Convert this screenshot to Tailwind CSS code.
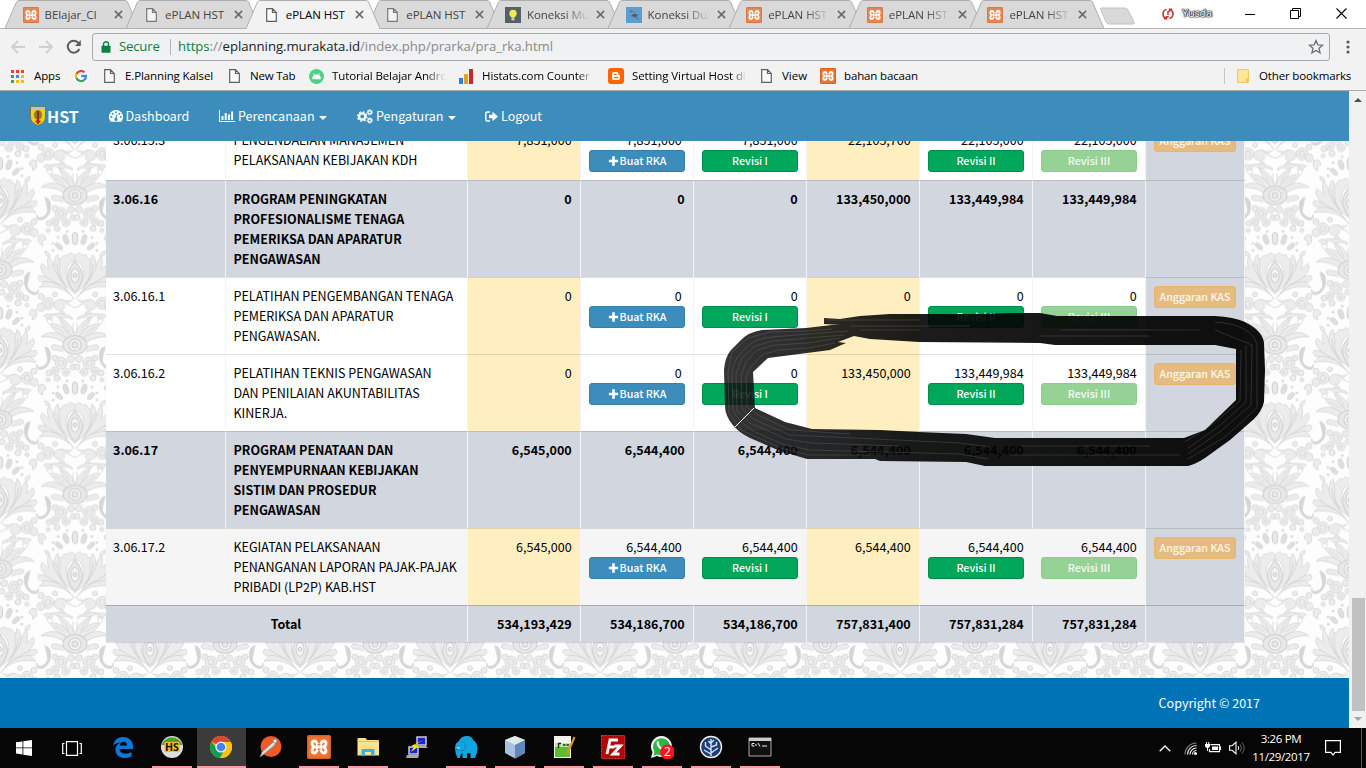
<!DOCTYPE html>
<html lang="id">
<head>
<meta charset="utf-8">
<title>ePLAN HST</title>
<script src="https://cdn.jsdelivr.net/npm/@tailwindcss/browser@4"></script>
</head>
<body class="w-[1366px] h-[768px] overflow-hidden bg-white flex flex-col">

<!-- shared symbols -->
<svg width="0" height="0" class="absolute">
  <defs>
    <symbol id="xampp" viewBox="0 0 24 24"><rect width="24" height="24" rx="2" fill="#ec7430"/><rect x=".8" y=".8" width="22.400" height="22.400" rx="1.500" fill="none" stroke="#c95a1c"/><path d="M10.500 9.500L9.300 7.200Q8.800 6 7.500 6 5 6 5 8.500 5 11 7.500 12 5 13 5 15.500 5 18 7.500 18q1.300 0 1.800-1.200l1.200-2.300M13.500 9.500l1.200-2.300Q15.200 6 16.500 6 19 6 19 8.500q0 2.500-2.500 3.500 2.500 1 2.500 3.500 0 2.500-2.500 2.500-1.300 0-1.800-1.200l-1.200-2.300" fill="none" stroke="#fff" stroke-width="2.800" stroke-linejoin="round"/><path d="M9 10.200l3 1 3-1v3.600l-3-1-3 1z" fill="#fff" stroke="#fff"/></symbol>
    <symbol id="doc" viewBox="0 0 11 14"><path d="M.7.7h5.800l3.800 3.800v8.800H.7zM6.500.7v3.800h3.800" fill="#fafafa" stroke="#606060" stroke-width="1.200"/></symbol>
    <symbol id="bulb" viewBox="0 0 16 16"><rect width="16" height="16" fill="#36424e"/><circle cx="8" cy="6.500" r="3.700" fill="#f6f02a"/><path d="M6.300 9h3.400v1.800H6.300z" fill="#f6f02a"/><path d="M6.500 11.300h3v2h-3z" fill="#ddd"/></symbol>
    <symbol id="bird" viewBox="0 0 16 16"><rect width="16" height="16" fill="#3c90d2"/><path d="M3 3l5 2 1 2 4 1-3 1 3 4-4-3-4-1 2-2z" fill="#353b45"/><path d="M5 5l3 1v1z" fill="#fff"/></symbol>
    <symbol id="close" viewBox="0 0 10 10"><path d="M1 1l8 8M9 1L1 9" stroke="#6a6a6a" stroke-width="1.700"/></symbol>
    <symbol id="plus" viewBox="0 0 10 10"><path d="M3.700.3h2.600v3.400h3.400v2.600H6.300v3.400H3.700V6.300H.3V3.700h3.400z" fill="#fff"/></symbol>
    <symbol id="chrome" viewBox="0 0 24 24"><circle cx="12" cy="12" r="11" fill="#fbc116"/><path d="M12 12L2.500 6.500A11 11 0 0 1 21.500 6.500L21.800 7H12z" fill="#db4437"/><path d="M2.500 6.500A11 11 0 0 0 11 23l5-9-8 0z" fill="#0f9d58"/><path d="M12 7h9.800A11 11 0 0 1 11 23l5.300-8.500z" fill="#fbc116"/><circle cx="12" cy="12" r="5.600" fill="#f4f4f4"/><circle cx="12" cy="12" r="4.300" fill="#4285f4"/></symbol>
  </defs>
</svg>

<!-- browser chrome -->
<header class="h-[91px] shrink-0 flex flex-col bg-[#f2f2f2] text-black border-b border-[#a9a9a9]" style="font-family:'Open Sans','Noto Sans',sans-serif">
  <div class="h-[29px] bg-white flex items-start relative border-b border-[#b5b5b5]">
    <div id="tabs" class="flex pl-[5px] h-[29px]"></div>
    <svg class="w-9 h-[18px] mt-[7px] ml-[10px]" viewBox="0 0 36 18"><path d="M1 1h24q2 0 3 2l6 12q1 2-1 2H9q-2 0-3-2L1 3q-1-2 0-2z" fill="#d8d8d8" stroke="#c2c2c2"/></svg>
    <div class="ml-auto flex items-center h-[27px]">
      <svg class="w-3 h-3 mr-[8px]" viewBox="0 0 12 12"><path d="M4.500 1.500Q1 2.500 1 6t3 4.500M2 10.700h2.500V8M7.500 10.500Q11 9.500 11 6T8 1.500M10 1.300H7.500V4M6 3v4M6 8v1.500" fill="none" stroke="#c9302c" stroke-width="1.500"/></svg>
      <span class="w-[30px] text-[11px] tracking-[-.2px] text-white mr-[33px] whitespace-nowrap [text-shadow:0_0_1px_#222,0_0_1px_#222,0_0_1px_#333,0_0_2px_#444,1px_0_1px_#333]">Yusda</span>
      <svg class="w-2.5 h-3 mr-[35px]" viewBox="0 0 10 12"><path d="M0 6.500h10" stroke="#000"/></svg>
      <svg class="w-[11px] h-[11px] mr-[35px]" viewBox="0 0 11 11"><path d="M.5 2.500h8v8h-8zM2.500 2V.5h8v8H9" fill="none" stroke="#000"/></svg>
      <svg class="w-[11px] h-[11px] mr-[19px]" viewBox="0 0 11 11"><path d="M.5.5l10 10M10.500.5l-10 10" stroke="#000" stroke-width="1.100"/></svg>
    </div>
  </div>
  <div class="h-[34px] flex items-center pl-[10px] pt-[2px]">
    <svg class="w-4 h-4 mr-[12px]" viewBox="0 0 16 16"><path d="M15 8H2M8 2L2 8l6 6" fill="none" stroke="#cfcfcf" stroke-width="1.800"/></svg>
    <svg class="w-4 h-4 mr-[12px]" viewBox="0 0 16 16"><path d="M1 8h13M8 2l6 6-6 6" fill="none" stroke="#cfcfcf" stroke-width="1.800"/></svg>
    <svg class="w-4 h-4 mr-[10px]" viewBox="0 0 16 16"><path d="M13.300 10A6 6 0 1 1 12.500 4" fill="none" stroke="#5a5a5a" stroke-width="2"/><path d="M14.800 1v6H9z" fill="#5a5a5a"/></svg>
    <div class="w-[1238px] h-7 rounded-[3px] border border-[#a9a9a9] bg-[#eff1f3] flex items-center px-2 text-[13.2px] whitespace-nowrap">
      <svg class="w-[10px] h-3 mr-[8px]" viewBox="0 0 10 12"><path d="M2.500 5V3.300a2.500 2.500 0 0 1 5 0V5" fill="none" stroke="#0b8043" stroke-width="1.400"/><rect x=".5" y="4.700" width="9" height="7" rx=".6" fill="#0b8043"/></svg>
      <span class="w-[41px] tracking-[-.2px] text-[#0b8043]">Secure</span>
      <i class="w-px h-4 bg-[#b5b5b5] ml-[10px] mr-[7px]"></i>
      <span class="text-[#8a8a8a] tracking-[-.05px]"><span class="text-[#0b8043]">https</span>://<span class="text-[#222]">eplanning.murakata.id</span>/index.php/prarka/pra_rka.html</span>
      <svg class="w-4 h-4 ml-auto -mr-[3px]" viewBox="0 0 16 16"><path d="M8 1.500l1.900 4.300 4.700.4-3.600 3.100 1.100 4.600L8 11.500l-4.100 2.400L5 9.300 1.400 6.200l4.700-.4z" fill="none" stroke="#6e6e6e" stroke-width="1.300"/></svg>
    </div>
    <svg class="w-1 h-[14px] ml-4" viewBox="0 0 4 14"><g fill="#5a5a5a"><circle cx="2" cy="2" r="1.600"/><circle cx="2" cy="7" r="1.600"/><circle cx="2" cy="12" r="1.600"/></g></svg>
  </div>
  <div class="h-[27px] flex items-center text-[11.500px] whitespace-nowrap pl-[11px] pb-px">
    <svg class="w-[13px] h-[13px] shrink-0 mr-[10px]" viewBox="0 0 13 13"><path d="M0 0h3v3H0zM5 0h3v3H5zM10 0h3v3h-3z" fill="#ea4335"/><path d="M0 5h3v3H0z" fill="#34a853"/><path d="M5 5h3v3H5z" fill="#4285f4"/><path d="M10 5h3v3h-3zM5 10h3v3H5zM10 10h3v3h-3z" fill="#fbbc05"/><path d="M0 10h3v3H0z" fill="#34a853"/></svg>
    <span class="w-[27px] tracking-[-.1px]">Apps</span>
    <svg class="w-4 h-4 ml-[12px] mr-[15px]" viewBox="0 0 16 16"><circle cx="8" cy="8" r="8" fill="#fff"/><g fill="none" stroke-width="2.300"><path d="M11.500 4.300A5 5 0 0 0 3.500 6" stroke="#ea4335"/><path d="M3.400 5.800a5 5 0 0 0 0 4.400" stroke="#fbbc05"/><path d="M3.400 10a5 5 0 0 0 7.900 1.800" stroke="#34a853"/><path d="M11.200 12A5 5 0 0 0 13 8H8.200" stroke="#4285f4"/></g></svg>
    <svg class="w-[11px] h-[14px] mr-[10px]"><use href="#doc"/></svg><span class="w-[89px] tracking-[-.12px]">E.Planning Kalsel</span>
    <svg class="w-[11px] h-[14px] ml-[15px] mr-[10px]"><use href="#doc"/></svg><span class="w-[46px] tracking-[-.2px]">New Tab</span>
    <svg class="w-[15px] h-[15px] ml-[13px] mr-[8px]" viewBox="0 0 15 15"><circle cx="7.500" cy="7.500" r="7.500" fill="#4fcf86"/><path d="M3.500 9.800a4 4 0 0 1 8 0zM4.500 4.200l1.200 2M10.500 4.200l-1.200 2" fill="#fff" stroke="#fff" stroke-width=".8"/></svg>
    <span class="w-[114px] overflow-hidden tracking-[-.1px] [mask-image:linear-gradient(90deg,#000_82%,transparent)]">Tutorial Belajar Android</span>
    <svg class="w-[14px] h-[15px] ml-[13px] mr-[9px]" viewBox="0 0 14 15"><path d="M0 9h4v6H0z" fill="#2b7de9"/><path d="M5 5h4v10H5z" fill="#e8a020"/><path d="M10 0h4v15h-4z" fill="#c62828"/></svg>
    <span class="w-[110px] overflow-hidden tracking-[-.1px] [mask-image:linear-gradient(90deg,#000_88%,transparent)]">Histats.com Counter ,</span>
    <svg class="w-4 h-4 ml-[16px] mr-[8px]" viewBox="0 0 16 16"><rect width="16" height="16" rx="3" fill="#f60"/><path d="M6 4h2.500a2 2 0 0 1 2 2v.5q0 .7 1 .7.5 0 .5.8v2a2 2 0 0 1-2 2H6a2 2 0 0 1-2-2V6a2 2 0 0 1 2-2z" fill="#fff"/><path d="M6.200 6.300h2M6.200 9.700h3.600" stroke="#f60" stroke-width="1.200" stroke-linecap="round"/></svg>
    <span class="w-[114px] overflow-hidden tracking-[-.1px] [mask-image:linear-gradient(90deg,#000_88%,transparent)]">Setting Virtual Host di</span>
    <svg class="w-[11px] h-[14px] ml-[15px] mr-[10px]"><use href="#doc"/></svg><span class="w-[25px]">View</span>
    <svg class="w-4 h-4 ml-[13px] mr-[8px]"><use href="#xampp"/></svg><span class="tracking-[-.15px]">bahan bacaan</span>
    <i class="w-px h-4 bg-[#c4c4c4] ml-auto mr-[12px]"></i>
    <svg class="w-3 h-[14px] mr-[10px]" viewBox="0 0 12 14"><path d="M.6.6h10.800v12.800H.6z" fill="#ffe69a" stroke="#ecc65a"/><path d="M9 9.500h2.500V13H9z" fill="#f3c94c"/></svg>
    <span class="w-[107px] tracking-[-.15px]">Other bookmarks</span>
  </div>
</header>

<!-- page viewport -->
<main class="h-[637px] shrink-0 flex" style="font-family:'Noto Sans CJK SC',sans-serif">
  <div class="w-[1349px] flex flex-col relative overflow-hidden">
    <svg class="absolute left-0 top-[50px] w-[1349px] h-[537px]" viewBox="0 141 1349 537">
      <defs>
        <g id="half" fill="#ececec" stroke="#d9d9d9" stroke-width=".9" stroke-linecap="round">
          <path d="M0-10C-2-18-8-24-16-28C-14-20-10-14-4-9zM-5-10C-10-18-18-22-25-21C-22-14-14-10-8-7zM-8-7C-16-14-28-14-34-8C-26-9-18-7-10-2z"/>
          <path d="M-26-21q-4-5 0-7q4 1 3 5M-2-12V-22M-6-14q-3-7-8-11M-11-12q-4-4-10-6" fill="none"/>
          <path d="M-10 2c-5 0-9-3-12-2s-2 5 2 5 6 1 8 2"/>
          <path d="M-30 2c8 0 8 18-2 22c-5 2-8-2-6-5c-1 7 14 2 10-8q-1-5-2-9z" fill="#d5d5d5"/>
          <g><circle cx="-14" cy="18" r="6"/><circle cx="-14" cy="18" r="3"/><circle cx="-4" cy="14" r="3.500"/><circle cx="-20" cy="26" r="4"/><circle cx="-20" cy="26" r="1.500"/><circle cx="-9" cy="27" r="4"/><circle cx="-9" cy="27" r="1.500"/><circle cx="-20" cy="13" r="3"/><circle cx="-18" cy="33" r="3"/><circle cx="-26" cy="28" r="3"/><circle cx="-2" cy="22" r="3"/><circle cx="-27" cy="35" r="2"/></g>
          <g fill="#dedede"><ellipse cx="-9" cy="44" rx="2.500" ry="5" transform="rotate(-20 -9 44)"/><ellipse cx="-16" cy="51" rx="2.300" ry="4.500" transform="rotate(-48 -16 51)"/><circle cx="-17" cy="42" r="1"/><circle cx="-8" cy="36" r="1"/><circle cx="-22" cy="48" r="1"/><circle cx="-22" cy="55" r="1"/></g>
          <path d="M0 60q-5-5-7 0q-5-2-6 3q-5 0-3 5q-2 18 16 30q-8-10-9-20q1-12 9-13z"/>
          <path d="M-1 103C-10 92-22 90-36 92l5-5c-6-1-7-4-5-7l7 1c-4-4-7-9-4-13l7 6c-2-5-2-11 0-13l6 9c-1-5 0-9 3-11l2 11c-2 14 6 24 14 33z"/>
          <path d="M-5 98C-14 88-24 86-31 86M-8 93C-17 82-20 76-22 69M-10 89q-8-8-8-20M-14 90q-8-4-16-9" fill="none" stroke="#d2d2d2"/>
          <path d="M0 112c-6 0-7-8-14-8s-10 7-4 10s10-3 6-5M-2 104q-4 5-10 1"/>
          <circle cx="-27" cy="108" r="6"/><circle cx="-27" cy="108" r="3"/><circle cx="-34" cy="112" r="4"/><circle cx="-34" cy="101" r="3"/><circle cx="-20" cy="99" r="2.500"/><circle cx="-13" cy="118" r="2.500"/>
          <path d="M-3 122q-9-6-22-3q8 1 9 4q8-3 13 1zM-31 120q5-4 9 2q-4 5-9-2z"/>
          <path d="M-36 40q6-3 7 4q-5 1-3 6q-7-2-4-10zM-30 56q5 0 5 5q-5 1-5-5z"/>
        </g>
        <g id="motif">
          <use href="#half"/><use href="#half" transform="scale(-1 1)"/>
          <g fill="#e8e8e8" stroke="#d0d0d0"><ellipse rx="12" ry="9.500"/><circle r="6" fill="#f4f4f4"/><circle r="3"/><ellipse cy="43" rx="2.800" ry="6"/><path d="M0 66q-9 9-7 18q3 10 7 12q4-2 7-12q2-9-7-18z"/><ellipse cy="80" rx="4" ry="7" fill="#f7f7f7"/><circle cy="80" r="2"/></g>
        </g>
        <pattern id="damask" patternUnits="userSpaceOnUse" x="0" y="46" width="150" height="149.500">
          <rect width="150" height="149.500" fill="#fdfdfd"/>
          <use href="#motif" x="75" y="0"/><use href="#motif" x="75" y="149.500"/>
          <use href="#motif" x="0" y="74.700"/><use href="#motif" x="150" y="74.700"/><use href="#motif" x="0" y="-74.800"/><use href="#motif" x="150" y="-74.800"/>
        </pattern>
      </defs>
      <rect y="141" width="1349" height="537" fill="url(#damask)"/>
    </svg>

    <nav class="h-[50px] shrink-0 bg-[#3c8dbc] text-white flex items-center pl-[30px] text-[12.540px] relative z-10 whitespace-nowrap">
      <svg class="w-4 h-5 mr-px" viewBox="0 0 16 20"><path d="M.5 1h15v10q0 6-7.500 8.500Q.5 17 .5 11z" fill="#e9d31b" stroke="#7c7a42"/><path d="M1 1h14v2.500H1z" fill="#c4c4b0"/><ellipse cx="8" cy="9" rx="4" ry="5" fill="#a8702a"/><path d="M8 5v9" stroke="#6d2c14" stroke-width="1.500"/><path d="M8 12v6M5.500 15.500h5" stroke="#bd2619" stroke-width="2"/></svg>
      <b class="text-[16.100px] w-[62px]">HST</b>
      <svg class="w-[14px] h-3 mr-[2.500px]" viewBox="0 0 14 12"><path d="M7 0a7 7 0 0 0-5.600 11.200q.3.600 1 .6h9.200q.7 0 1-.6A7 7 0 0 0 7 0z" fill="#fff"/><g fill="#3c8dbc"><circle cx="2.300" cy="7" r="1"/><circle cx="3.700" cy="3.700" r="1"/><circle cx="7" cy="2.300" r="1"/><circle cx="10.300" cy="3.700" r="1"/><circle cx="11.700" cy="7" r="1"/><path d="M7.600 4.500l.9.200-.7 3.300a1.600 1.600 0 1 1-1.200-.2z"/></g></svg>
      <span class="w-[93.500px]">Dashboard</span>
      <svg class="w-4 h-3 mr-[3px]" viewBox="0 0 16 12"><path d="M0 0h1v11h15v1H0zM2.500 6h2v4h-2zM5.700 3h2v7h-2zM8.900 4.500h2V10h-2zM12.100 1.500h2V10h-2z" fill="#fff"/></svg>
      <span class="w-[76px]">Perencanaan</span><i class="border-x-4 border-t-4 border-x-transparent border-t-white ml-[5px] mr-[30px] mt-[3px]"></i>
      <svg class="w-4 h-[15px] mr-[3px]" viewBox="0 0 16 15"><g fill="none" stroke="#fff"><circle cx="5.200" cy="7.500" r="3.100" stroke-width="2.400"/><circle cx="5.200" cy="7.500" r="4.700" stroke-width="1.300" stroke-dasharray="1.800 1.890"/><circle cx="12.700" cy="3.300" r="1.700" stroke-width="1.400"/><circle cx="12.700" cy="3.300" r="2.700" stroke-dasharray="1.200 1.220"/><circle cx="12.700" cy="11.500" r="1.700" stroke-width="1.400"/><circle cx="12.700" cy="11.500" r="2.700" stroke-dasharray="1.200 1.220"/></g></svg>
      <span class="w-[66px]">Pengaturan</span><i class="border-x-4 border-t-4 border-x-transparent border-t-white ml-[6px] mr-[29px] mt-[3px]"></i>
      <svg class="w-[13px] h-[11px] mr-[3px]" viewBox="0 0 13 11"><path d="M5 .9H2.500Q.8.900.8 2.500v6q0 1.600 1.700 1.600H5" fill="none" stroke="#fff" stroke-width="1.500"/><path d="M4 3.700h3.500V.8L13 5.500l-5.500 4.700V7.300H4z" fill="#fff"/></svg>
      <span>Logout</span>
    </nav>

    <section class="h-[537px] shrink-0 relative overflow-hidden">
      <div id="table" class="ml-[106px] -mt-[20px] w-[1139px] flex flex-col text-[12.540px] leading-5 text-black relative shadow-[0_1px_1px_rgba(0,0,0,.1)]"></div>
    </section>

    <footer class="h-[50px] shrink-0 bg-[#0073b7] text-white text-[12.540px] flex items-center justify-end pr-[89px] relative">Copyright © 2017</footer>

    <!-- hand-drawn marker loop over the highlighted row -->
    <svg class="absolute left-0 top-0 w-[1349px] h-[637px]" viewBox="0 91 1349 637">
      <defs><linearGradient id="ink" gradientUnits="userSpaceOnUse" x1="724" y1="0" x2="1265" y2="0"><stop offset="0" stop-color="#101010" stop-opacity=".85"/><stop offset=".2" stop-color="#0a0a0a" stop-opacity=".87"/><stop offset=".35" stop-color="#050505" stop-opacity=".91"/><stop offset="1" stop-opacity=".94"/></linearGradient></defs>
      <path fill="url(#ink)" fill-rule="evenodd" d="M824 318L840 319L860 316L890 314L980 314L1010 313L1040 313L1057 316L1215 316Q1234 317 1245 322Q1263 331 1264 343L1265 370L1264 402Q1262 411 1254 419L1230 440L1205 458Q1196 464 1188 466L1110 466L985 466L966 462L880 461L875 459L807 459L780 451L750 438Q738 432 732 424Q725 415 725 406L724 370Q725 357 731 350L740 341Q748 332 762 330L806 328L832 325L840 325L824 324zM854 336L870 339L919 342L1040 343L1055 345L1215 345L1236 349L1236 400L1205 430L1184 438L995 438L966 434L919 432L880 430L812 429L785 422L755 408L753 372L768 358L807 353L830 350L846 343L838 342z"/>
      <g fill="none" stroke="#999" stroke-opacity=".28" stroke-width=".8" stroke-linejoin="round">
        <path d="M848 331L808 334L772 337Q756 338 748 346Q734 357 732 372L733 410Q738 422 755 432L782 444L810 450L960 454L988 459"/>
        <path d="M840 338L808 343L775 345L757 350L746 362L741 375L742 409L755 420L790 435L960 443L990 447"/>
        <path d="M844 335L808 338L773 341L755 346L742 358L736 374L737 411L750 423L786 439L812 443L900 446"/>
        <path d="M835 343L808 348L778 350L762 355L751 367L746 377L747 407L760 416L790 430L850 434"/>
        <path d="M832 329L808 331L770 332L748 338L732 352L728 372L729 413L741 430L781 448L808 455L870 455"/>
        <path d="M1188 459L1225 437L1257 408L1257 344Q1250 324 1215 322M1188 454L1221 431L1251 405L1252 345L1215 330M1185 442L1213 424L1240 401L1241 350M1188 448L1218 427L1246 402V346"/>
        <path d="M826 320H920M850 326H970M860 330H920M1060 330H1200M1040 336H1150M1020 446H1150M1010 455H1180"/>
      </g>
      <path d="M735 427L754 408" stroke="#fff" stroke-width="1"/>
    </svg>
  </div>
  <aside class="w-[17px] bg-[#f1f1f1] flex flex-col items-center">
    <i class="border-x-4 border-b-4 border-x-transparent border-b-[#505050] mt-[7px]"></i>
    <i class="w-[13px] h-[113px] bg-[#c1c1c1] mt-[496px] ml-px"></i>
    <i class="border-x-4 border-t-4 border-x-transparent border-t-[#a3a3a3] mt-[6px]"></i>
  </aside>
</main>

<!-- taskbar -->
<footer class="h-10 shrink-0 bg-[#060606] text-white flex items-stretch" style="font-family:'Open Sans','Noto Sans',sans-serif">
  <div class="w-12 flex items-center justify-center"><svg class="w-4 h-4" viewBox="0 0 16 16"><path d="M0 2.300L6.500 1.400v6.100H0zM7.300 1.300L16 0v7.500H7.300zM0 8.300h6.500v6.200L0 13.600zM7.300 8.300H16V16l-8.700-1.300z" fill="#fff"/></svg></div>
  <div class="w-12 flex items-center justify-center"><svg class="w-5 h-[15px]" viewBox="0 0 20 15"><path d="M4.500.7h11v13.600h-11zM2.500 2.500H.7v10h1.800M17.500 2.500h1.800v10h-1.800" fill="none" stroke="#fff" stroke-width="1.200"/></svg></div>
  <div id="apps" class="flex ml-[3px]"></div>
  <div class="ml-auto flex items-center">
    <svg class="w-3 h-[7px] mr-[13px]" viewBox="0 0 12 7"><path d="M.7 6.300L6 1l5.300 5.300" fill="none" stroke="#fff" stroke-width="1.300"/></svg>
    <svg class="w-[13px] h-[13px] mr-[8px]" viewBox="0 0 13 13"><g fill="none"><path d="M1 12.500A11.500 11.500 0 0 1 12.500 1" stroke="#888" stroke-width="1.100"/><path d="M3.500 12.500a9 9 0 0 1 9-9M6 12.500A6.500 6.500 0 0 1 12.500 6M8.500 12.500a4 4 0 0 1 4-4" stroke="#eee" stroke-width="1.200"/></g><circle cx="11.500" cy="11.500" r="1.500" fill="#fff"/></svg>
    <svg class="w-4 h-3 mr-[8px]" viewBox="0 0 16 12"><path d="M5.500 2.700h9v7H4.500V7" fill="none" stroke="#fff" stroke-width="1.200"/><path d="M7 4.500h6v3.500H7zM15 4.500h1v3.500h-1zM0 2h5v2.500L3.500 6h-2L0 4.500zM1 0h1v2H1zM3.200 0h1v2h-1zM2 6h1v3H2z" fill="#fff"/></svg>
    <svg class="w-4 h-[14px] mr-[7px]" viewBox="0 0 16 14"><path d="M.6 4.700h2.600L7 1.200v11.600L3.200 9.300H.6z" fill="none" stroke="#fff" stroke-width="1.100"/><path d="M9 5q1.500 2 0 4" stroke="#fff" fill="none"/><path d="M11 3.200q3 3.800 0 7.600M13 1.500q4.500 5.500 0 11" stroke="#666" fill="none"/></svg>
    <div class="text-[11.500px] tracking-[-.35px] w-[58px] flex flex-col items-center leading-[18px] whitespace-nowrap mr-[15px]"><span>3:26 PM</span><span>11/29/2017</span></div>
    <svg class="w-4 h-4 mr-[20px]" viewBox="0 0 16 16"><path d="M.6.600h14.800v11.800h-5.400L8 15l-2-2.600H.6z" fill="none" stroke="#fff" stroke-width="1.200"/></svg>
    <i class="w-px h-10 bg-[#555] mr-1"></i>
  </div>
</footer>

<script>
const tabs = [['BElajar_CI','xampp'],['ePLAN HST','doc'],['ePLAN HST','doc'],['ePLAN HST','doc'],['Koneksi Mult','bulb'],['Koneksi Dua','bird'],['ePLAN HST','xampp'],['ePLAN HST','xampp'],['ePLAN HST','xampp']];
document.getElementById('tabs').innerHTML = tabs.map(([t,ic],i) => {
  const on = i===2, fade = i>3;
  return `<div class="relative w-[134px] h-[29px] mr-[-13.4px] shrink-0 ${on?'z-10':'z-0'}">
    <svg class="absolute inset-0 w-[134px] h-[29px]" viewBox="0 0 134 29"><path d="M0 28.500L11.500 2Q12.500.5 14 .5H120Q121.500.5 122.500 2L134 28.500" fill="${on?'#f2f2f2':'#d9d9d9'}" stroke="#adadad"/>${on?'<path d="M1 28.500h132" stroke="#f2f2f2"/>':'<path d="M0 28.500h134" stroke="#b0b0b0"/>'}</svg>
    <div class="relative flex items-center h-[29px] pl-[17.500px] text-[11.500px] tracking-[-.05px] whitespace-nowrap">
      <span class="w-4 h-4 mr-[6px] flex items-center justify-center ${on?'':'opacity-80'}">${ic==='doc'?'<svg class="w-[11px] h-[14px]"><use href="#doc"/></svg>':`<svg class="w-4 h-4"><use href="#${ic}"/></svg>`}</span>
      <span class="w-[62px] overflow-hidden ${on?'text-black':'text-[#444]'} ${fade?'[mask-image:linear-gradient(90deg,#000_60%,transparent)]':''}">${t}</span>
      <svg class="w-[9px] h-[9px] ml-[7px]"><use href="#close"/></svg>
    </div></div>`;
}).join('');

const rows = [
 {h:'h-[59px]',c:'3.06.15.3',t:['PENGENDALIAN MANAJEMEN','PELAKSANAAN KEBIJAKAN KDH'],n:['7,851,000','7,851,000','7,851,000','22,105,700','22,105,000','22,105,000']},
 {h:'h-[97px]',b:1,c:'3.06.16',t:['PROGRAM PENINGKATAN','PROFESIONALISME TENAGA','PEMERIKSA DAN APARATUR','PENGAWASAN'],n:['0','0','0','133,450,000','133,449,984','133,449,984']},
 {h:'h-[77px]',c:'3.06.16.1',t:['PELATIHAN PENGEMBANGAN TENAGA','PEMERIKSA DAN APARATUR','PENGAWASAN.'],n:['0','0','0','0','0','0']},
 {h:'h-[77px]',c:'3.06.16.2',t:['PELATIHAN TEKNIS PENGAWASAN','DAN PENILAIAN AKUNTABILITAS','KINERJA.'],n:['0','0','0','133,450,000','133,449,984','133,449,984']},
 {h:'h-[97px]',b:1,c:'3.06.17',t:['PROGRAM PENATAAN DAN','PENYEMPURNAAN KEBIJAKAN','SISTIM DAN PROSEDUR','PENGAWASAN'],n:['6,545,000','6,544,400','6,544,400','6,544,400','6,544,400','6,544,400']},
 {h:'h-[77px]',s:1,c:'3.06.17.2',t:['KEGIATAN PELAKSANAAN','PENANGANAN LAPORAN PAJAK-PAJAK','PRIBADI (LP2P) KAB.HST'],n:['6,545,000','6,544,400','6,544,400','6,544,400','6,544,400','6,544,400']},
 {h:'h-[37px]',b:1,total:1,n:['534,193,429','534,186,700','534,186,700','757,831,400','757,831,284','757,831,284']}];
const btn = 'h-[22px] rounded-[3px] border text-white text-[10.700px] font-medium leading-5 flex items-center justify-center gap-px whitespace-nowrap';
const buttons = [null,
 `<div class="${btn} bg-[#3c8dbc] border-[#367fa9]"><svg class="w-[11px] h-[10px]" viewBox="0 0 10 10"><use href="#plus"/></svg>Buat RKA</div>`,
 `<div class="${btn} bg-[#00a65a] border-[#008d4c]">Revisi I</div>`, null,
 `<div class="${btn} bg-[#00a65a] border-[#008d4c]">Revisi II</div>`,
 `<div class="${btn} bg-[#96d296] border-[#8bcc8b] text-white/90">Revisi III</div>`];
document.getElementById('table').innerHTML = rows.map(r => {
  const line = r.total ? 'border-t border-t-black/20' : 'border-t border-t-black/12';
  const bg = r.b ? 'bg-[#d2d6de]' : r.s ? 'bg-[#f5f5f5]' : 'bg-white';
  const cell = `shrink-0 ${line} border-r border-r-[#f4f4f4] py-2 pr-2`;
  const head = r.total ? `<div class="${cell} ${bg} w-[362px] pl-[7px] text-center">Total</div>` :
   `<div class="${cell} ${bg} w-[120px] pl-[7px]">${r.c}</div><div class="${cell} ${bg} w-[242px] pl-[7.500px] whitespace-nowrap">${r.t.map(x=>`<div>${x}</div>`).join('')}</div>`;
  return `<div class="flex ${r.h} ${r.b?'font-bold':''}">${head}${r.n.map((n,i)=>`<div class="${cell} ${!r.b&&(i===0||i===3)?'bg-[#ffeec0]':bg} w-[113px] pl-2"><div class="text-right ${!r.b&&i===1?'pr-[3.200px]':'pr-[.3px]'}">${n}</div>${!r.b&&buttons[i]?buttons[i]:''}</div>`).join('')}<div class="${cell} bg-[#d2d6de] w-[99px] pl-2">${r.b?'':`<div class="${btn} bg-[#e6bb80] border-[#e8b56c] text-white/85">Anggaran KAS</div>`}</div></div>`;
}).join('');

const svg = (vb,inner) => `<svg class="w-6 h-6" viewBox="0 0 ${vb} ${vb}">${inner}</svg>`;
const apps = [
 [0,svg(24,'<path d="M2 11C3 5 7 2 12 2c6 0 10 4 10 9v3H8.500c.5 5 7 6 12 3v4.500C13 25 4 22 4.500 14c.2-3 2-5 5-6.500C6 7.500 3.500 9 2 11zM8.700 10.500H16c0-5-6.500-5-7.300 0z" fill="#0a7ad8"/>')],
 [1,svg(24,'<circle cx="12" cy="12" r="11" fill="#ddd"/><path d="M1.500 10A11 11 0 0 1 22.500 10z" fill="#45a82c"/><rect x="4.500" y="7" width="15" height="10" fill="#f9b920"/><text x="12" y="15.800" text-anchor="middle" font-size="10.500" font-weight="700" fill="#111" font-family="Open Sans">HS</text>')],
 [2,'<svg class="w-6 h-6"><use href="#chrome"/></svg>'],
 [0,svg(24,'<circle cx="13" cy="11.500" r="10.500" fill="#f15a24"/><path d="M2 22l2-5 11-10 3-2 1 2-3 4L5 20z" fill="#ddd" stroke="#777" stroke-width=".8"/><circle cx="17" cy="6" r="2" fill="#eee" stroke="#777" stroke-width=".7"/>')],
 [1,'<svg class="w-6 h-6"><use href="#xampp"/></svg>'],
 [1,svg(24,'<path d="M1.500 4q0-1 1-1h7l1.500 2h11q1 0 1 1v14.500h-21.500z" fill="#fce28a"/><path d="M1.500 6.500h21.500" stroke="#e8bf4e"/><path d="M5.500 21v-6q0-1 1-1h11q1 0 1 1v6h-3.500v-4h-6v4z" fill="#36b0e8"/>')],
 [0,svg(24,'<path d="M12 2h9v8h-9zM4 12h9v7H4z" fill="#1424d8" stroke="#ccc" stroke-width="1.500"/><path d="M10 11h11l2 2H11zM2 20h12l-1 3H1z" fill="#aaa"/><path d="M18 5l-8 5 4 1-8 6 3-5-3-1z" fill="#ffea00"/>')],
 [1,svg(24,'<path d="M1 13Q1 8 5 6Q7 1 13 1q5 0 6 4q4 2 4.500 8q0 5-2.500 10h-4.500v-5q-2 1-3.500 0v5H8.500v-5Q6 19 6 23H3.500Q1 18 1 13z" fill="#10a7e0"/><path d="M7 6q6 2 4 8q-2 3-5 1M1.500 15q3 1 4-2" stroke="#0b86b8" fill="none"/><path d="M3 12q1 2 3 1" stroke="#e6f8ff" fill="none"/>')],
 [1,svg(24,'<path d="M12 1l10 4v13l-10 5.500L2 18V5z" fill="#a9bfdf"/><path d="M12 1l10 4-10 5L2 5z" fill="#dcebe8"/><path d="M12 10l10-5v13l-10 5.500z" fill="#6485ba"/>')],
 [1,svg(24,'<path d="M2 1h17v22H2z" fill="#f4f4ee"/><path d="M3 12h15v10H3z" fill="#5dbb32"/><path d="M3 8h15v4H3z" fill="#bfe6a4"/><path d="M6.500 8v5M6 8.500h3M11 10h2.500M14.500 10H17" stroke="#222" stroke-width="1.300" fill="none"/><path d="M22.500 2l-6 14-1 3" stroke="#d99422" stroke-width="2.200" fill="none"/>')],
 [1,svg(24,'<rect x=".5" y=".5" width="23" height="23" fill="#b3080a" stroke="#e33" stroke-dasharray="2 1"/><path d="M6 19L9 5h8M7.500 12h6M13.500 11h6L12 19h6.500" fill="none" stroke="#fff" stroke-width="2.800"/>')],
 [1,svg(24,'<path d="M1 23l1.500-6A10.500 10.500 0 1 1 7 21z" fill="#f2f2f2"/><path d="M3.500 20.500l1-4a8.500 8.500 0 1 1 3.500 3z" fill="#2cb742"/><path d="M8.500 6.500q-2 2 1 5.500t6 3.500" fill="none" stroke="#fff" stroke-width="2.200"/><circle cx="17.500" cy="17" r="7.500" fill="#f3161c"/><text x="17.500" y="21.300" text-anchor="middle" font-size="12" fill="#fff" font-family="Open Sans">2</text>')],
 [1,svg(24,'<circle cx="12" cy="12" r="10.500" fill="#1c3f78" stroke="#eee" stroke-width="1.400"/><path d="M12 21V4M12 15L6.500 11V7M12 12l5.500-2V7M12 18l7-5M12 19l-7-4M12 9L9.500 6M12 8l3-3" fill="none" stroke="#d5e3f7" stroke-width="1.400"/>')],
 [1,svg(24,'<path d="M1 3h22v18H1z" fill="#101010" stroke="#aaa"/><path d="M1 3h22v3H1z" fill="#ccc"/><path d="M4 8.500h2.500M4 8.500v2.500h2.500M8 9v2M10 8l2 3.500M14 11h5" stroke="#eee" fill="none"/>')]];
document.getElementById('apps').innerHTML = apps.map(([s,g]) =>
 `<div class="w-[48.950px] shrink-0 flex flex-col items-center ${s===2?'bg-[#3b3b3b]':''}"><div class="h-[38px] w-full flex items-center justify-center">${g}</div><i class="h-[2px] ${s===2?'w-full bg-[#f79b9f]':s===1?'w-10 bg-[#f79b9f]':'w-10'}"></i></div>`).join('');
</script>
</body>
</html>
